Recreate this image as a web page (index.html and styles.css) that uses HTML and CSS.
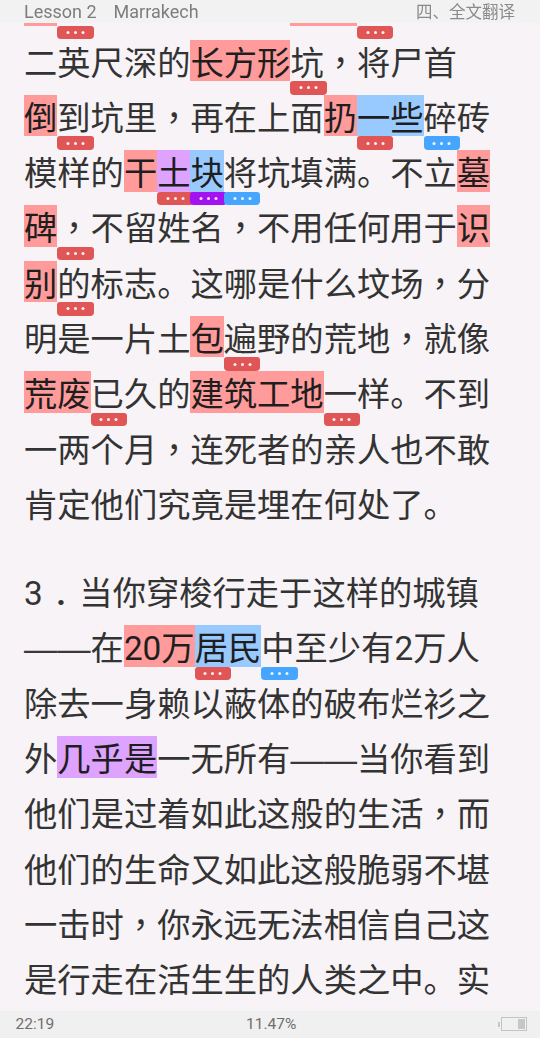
FILE: index.html
```html
<!DOCTYPE html>
<html lang="zh-CN">
<head>
<meta charset="utf-8">
<title>Lesson 2 Marrakech</title>
<link rel="stylesheet" href="styles.css">
</head>
<body>
<header class="top">
  <div class="top-left"><span>Lesson 2</span><span class="top-title">Marrakech</span></div>
  <div class="top-right">四、全文翻译</div>
</header>

<main class="article">
  <div class="para">
    <div class="l"><span class="h red w1"><i class="b red"></i></span><span class="gap7"></span><span class="h red w2"><i class="b red"></i></span></div>
    <div class="l">二英尺深的<span class="h red">长方形<i class="b red"></i></span>坑<span class="c" lang="zh-TW">，</span>将尸首</div>
    <div class="l"><span class="h red">倒<i class="b red"></i></span>到坑里<span class="c" lang="zh-TW">，</span>再在上面<span class="h red">扔<i class="b red"></i></span><span class="h blue">一些<i class="b blue"></i></span>碎砖</div>
    <div class="l">模样的<span class="h red">干<i class="b red"></i></span><span class="h purple">土<i class="b purple"></i></span><span class="h blue">块<i class="b blue"></i></span>将坑填满。不立<span class="h red">墓</span></div>
    <div class="l"><span class="h red">碑<i class="b red"></i></span><span class="c" lang="zh-TW">，</span>不留姓名<span class="c" lang="zh-TW">，</span>不用任何用于<span class="h red">识</span></div>
    <div class="l"><span class="h red">别<i class="b red"></i></span>的标志。这哪是什么坟场<span class="c" lang="zh-TW">，</span>分</div>
    <div class="l">明是一片土<span class="h red">包<i class="b red"></i></span>遍野的荒地<span class="c" lang="zh-TW">，</span>就像</div>
    <div class="l"><span class="h red">荒废<i class="b red"></i></span>已久的<span class="h red">建筑工地<i class="b red"></i></span>一样。不到</div>
    <div class="l">一两个月<span class="c" lang="zh-TW">，</span>连死者的亲人也不敢</div>
    <div class="l">肯定他们究竟是埋在何处了。</div>
  </div>
  <div class="para">
    <div class="l"><span class="num">3</span><span class="dot">.</span>当你穿梭行走于这样的城镇</div>
    <div class="l"><span class="dash">——</span>在<span class="h red"><span class="num">20</span>万<i class="b red"></i></span><span class="h blue">居民<i class="b blue"></i></span>中至少有<span class="num">2</span>万人</div>
    <div class="l">除去一身赖以蔽体的破布烂衫之</div>
    <div class="l">外<span class="h purple">几乎是</span>一无所有<span class="dash">——</span>当你看到</div>
    <div class="l">他们是过着如此这般的生活<span class="c" lang="zh-TW">，</span>而</div>
    <div class="l">他们的生命又如此这般脆弱不堪</div>
    <div class="l">一击时<span class="c" lang="zh-TW">，</span>你永远无法相信自己这</div>
    <div class="l">是行走在活生生的人类之中。实</div>
  </div>
</main>

<footer class="bottom">
  <span class="time">22:19</span>
  <span class="progress">11.47%</span>
  <span class="battery"><span class="nub"></span><span class="cell"><span class="fill"></span></span></span>
</footer>
</body>
</html>
```

FILE: styles.css
```css
html, body {
  margin: 0;
  padding: 0;
}

body {
  background: #f7f3f6;
  font-family: "Noto Sans CJK SC", sans-serif;
  color: #333333;
  overflow: hidden;
}

.top {
  position: fixed;
  top: 0;
  left: 0;
  right: 0;
  height: 23.4px;
  background: #f2f2f2;
  display: flex;
  justify-content: space-between;
  align-items: center;
  padding: 0 25px 0 24px;
  z-index: 5;
}

.top-left {
  font-family: Roboto, "Noto Sans", sans-serif;
  font-size: 18px;
  color: #7d7d7d;
  line-height: 23px;
  display: flex;
  gap: 17px;
}

.top-right {
  font-family: "Noto Sans CJK SC", sans-serif;
  font-size: 16.5px;
  color: #8a8a8a;
  line-height: 23px;
}

.article {
  padding: 0 0 0 24px;
  margin-top: -15.8px;
  font-size: 33.3px;
}

.para {
  margin-bottom: 33px;
}

.l {
  height: 55.3px;
  line-height: 41.5px;
  white-space: nowrap;
}

.h {
  display: inline-block;
  position: relative;
  height: 41.5px;
  vertical-align: top;
  color: #1e1e1e;
}

.w1 { width: 1em; }
.w2 { width: 2em; }
.gap7 {
  display: inline-block;
  width: 7em;
}

.h.red { background: #ff9b9b; }
.h.blue { background: #99caff; }
.h.purple { background: #dea2ff; }

.b {
  position: absolute;
  left: 100%;
  top: 100%;
  width: 36.5px;
  height: 13.5px;
  border-radius: 3px 3px 4px 4px;
}

.b.red { background: #e05656; }
.b.blue { background: #46a6ff; }
.b.purple { background: #a412f2; }

.b::before {
  content: "";
  position: absolute;
  left: 50%;
  top: 50%;
  width: 3px;
  height: 3px;
  margin: -1.5px 0 0 -1.5px;
  border-radius: 50%;
  background: rgba(255, 255, 255, 0.92);
  box-shadow: -7.5px 0 rgba(255, 255, 255, 0.92), 7.5px 0 rgba(255, 255, 255, 0.92);
}

.c {
  font-family: "Noto Sans CJK TC", sans-serif;
}

.num {
  font-family: Roboto, sans-serif;
}

.dot {
  display: inline-block;
  width: 1.1em;
  text-align: center;
  font-family: Roboto, sans-serif;
  font-weight: bold;
}

.dash {
  font-family: "Liberation Sans", sans-serif;
  color: #3a3a3a;
}

.bottom {
  position: fixed;
  left: 0;
  right: 0;
  bottom: 0;
  height: 27.3px;
  background: #f0f0f0;
  display: grid;
  grid-template-columns: 1fr auto 1fr;
  align-items: center;
  padding: 0 13px 0 15.5px;
  font-family: Roboto, sans-serif;
  font-size: 15.5px;
  color: #6f6f6f;
  z-index: 5;
}

.progress {
  text-align: center;
}

.battery {
  justify-self: end;
  display: flex;
  align-items: center;
}

.nub {
  width: 2px;
  height: 5px;
  background: #c8c8c8;
  margin-right: 1px;
}

.cell {
  width: 22px;
  height: 10px;
  border: 1px solid #c4c4c4;
  display: flex;
  justify-content: flex-end;
  padding: 1px;
}

.fill {
  width: 7px;
  height: 100%;
  background: #c6c6c6;
}
```
